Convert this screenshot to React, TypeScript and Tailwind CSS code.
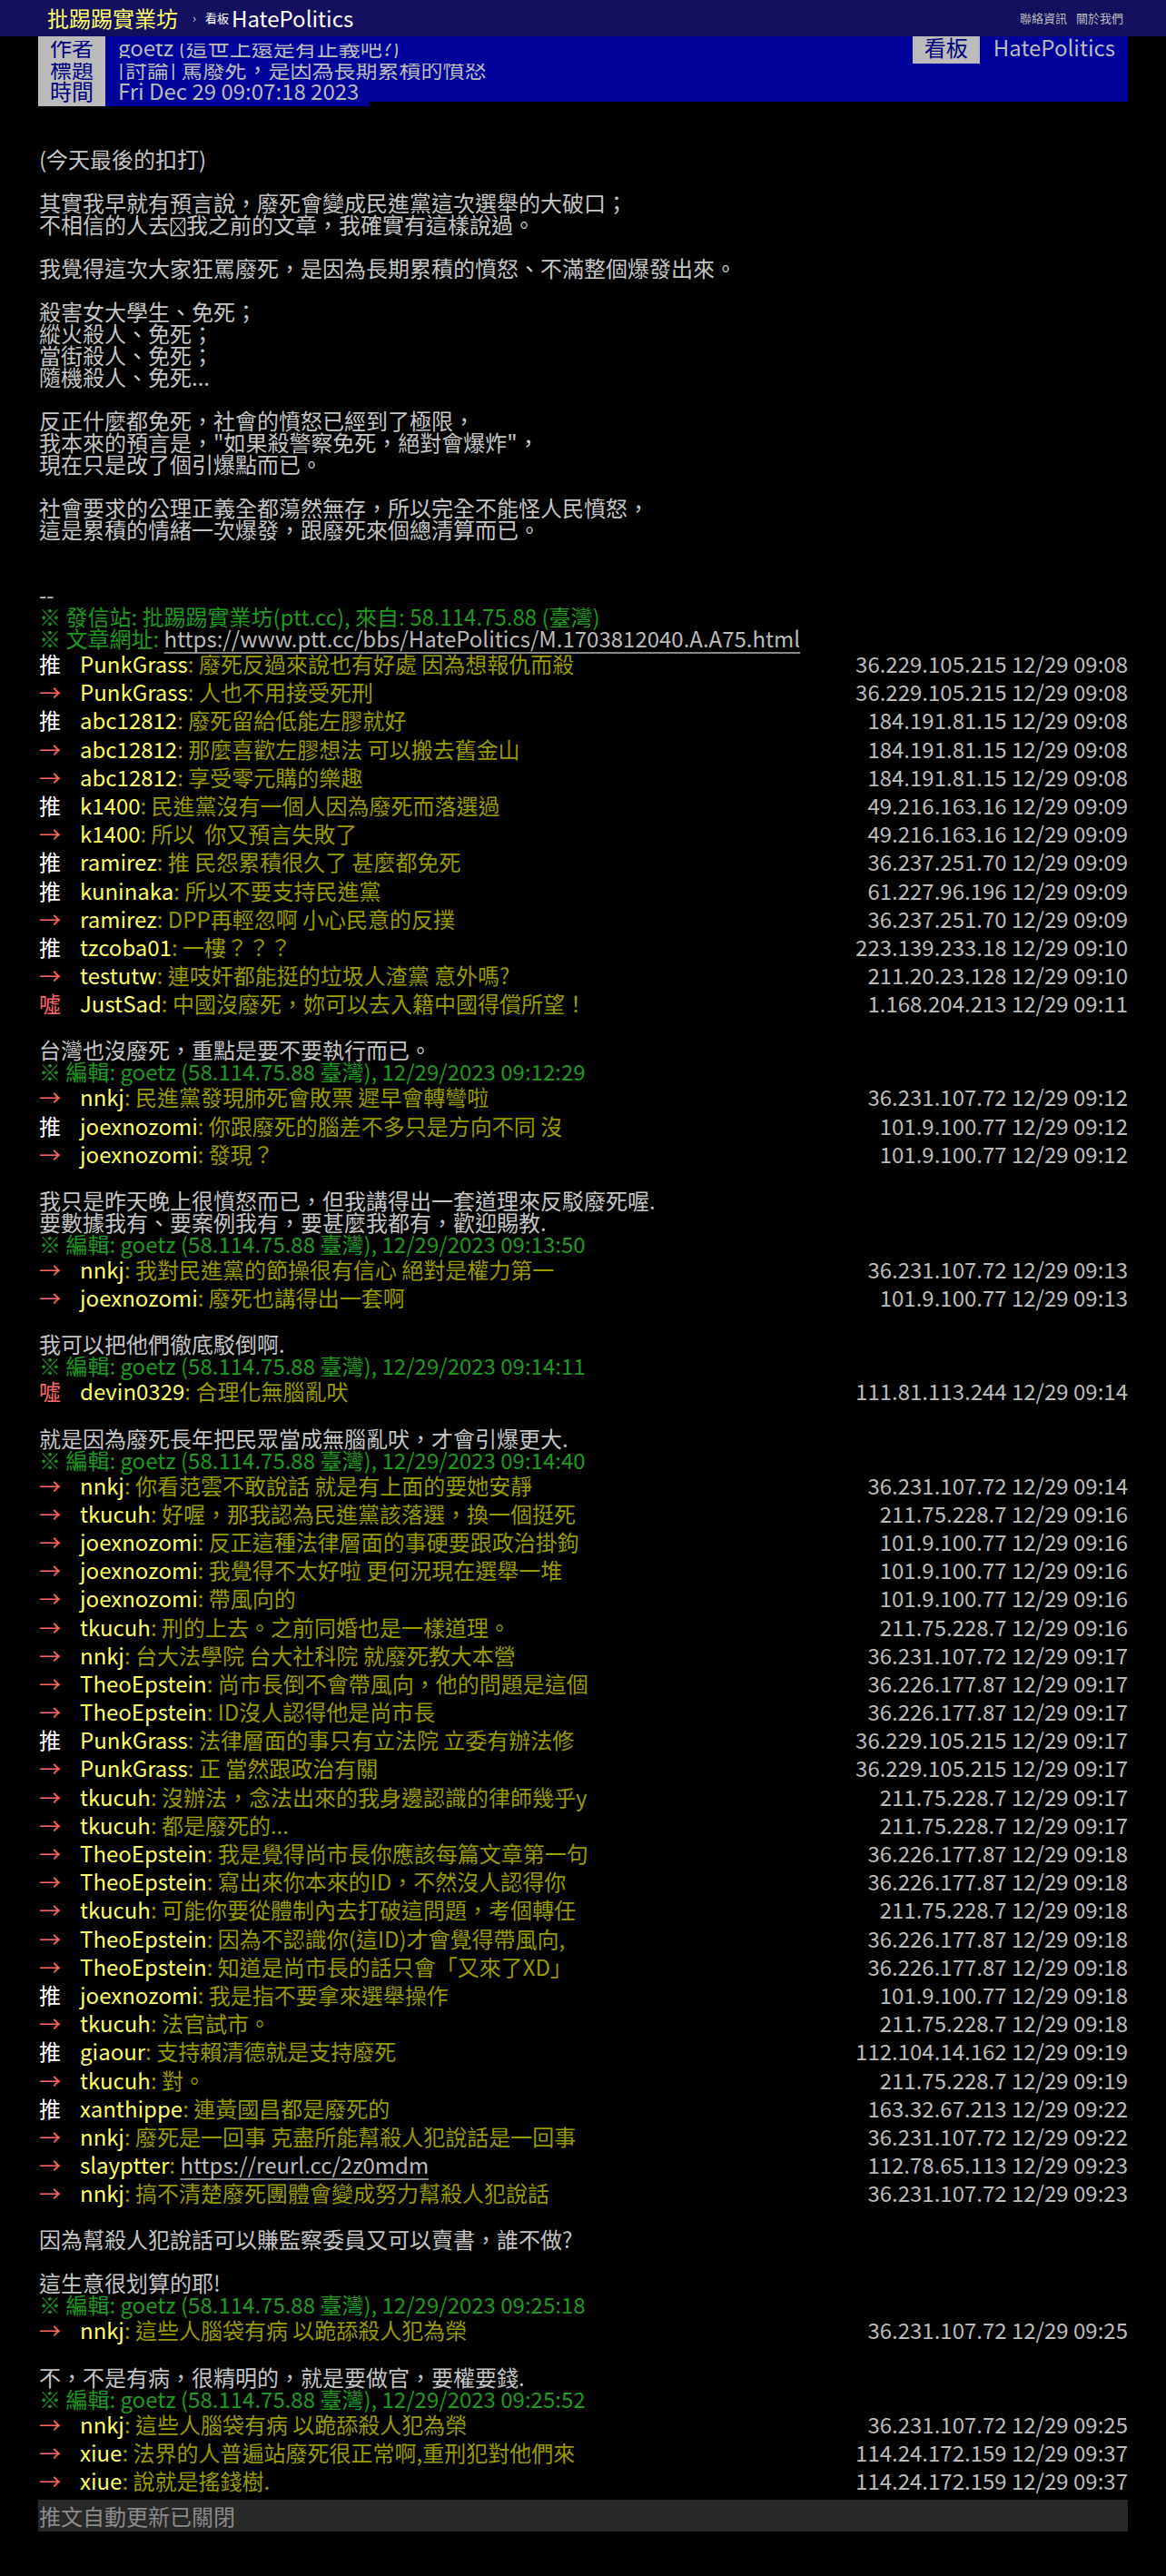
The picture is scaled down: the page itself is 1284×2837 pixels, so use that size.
import React from "react";

type Push = { t: "推" | "→" | "噓"; u: string; c: string; ip: string; link?: boolean };

const g1: Push[] = [
  { t: "推", u: "PunkGrass", c: "廢死反過來說也有好處 因為想報仇而殺", ip: "36.229.105.215 12/29 09:08" },
  { t: "→", u: "PunkGrass", c: "人也不用接受死刑", ip: "36.229.105.215 12/29 09:08" },
  { t: "推", u: "abc12812", c: "廢死留給低能左膠就好", ip: "184.191.81.15 12/29 09:08" },
  { t: "→", u: "abc12812", c: "那麼喜歡左膠想法 可以搬去舊金山", ip: "184.191.81.15 12/29 09:08" },
  { t: "→", u: "abc12812", c: "享受零元購的樂趣", ip: "184.191.81.15 12/29 09:08" },
  { t: "推", u: "k1400", c: "民進黨沒有一個人因為廢死而落選過", ip: "49.216.163.16 12/29 09:09" },
  { t: "→", u: "k1400", c: "所以  你又預言失敗了", ip: "49.216.163.16 12/29 09:09" },
  { t: "推", u: "ramirez", c: "推 民怨累積很久了 甚麼都免死", ip: "36.237.251.70 12/29 09:09" },
  { t: "推", u: "kuninaka", c: "所以不要支持民進黨", ip: "61.227.96.196 12/29 09:09" },
  { t: "→", u: "ramirez", c: "DPP再輕忽啊 小心民意的反撲", ip: "36.237.251.70 12/29 09:09" },
  { t: "推", u: "tzcoba01", c: "一樓？？？", ip: "223.139.233.18 12/29 09:10" },
  { t: "→", u: "testutw", c: "連吱奸都能挺的垃圾人渣黨 意外嗎?", ip: "211.20.23.128 12/29 09:10" },
  { t: "噓", u: "JustSad", c: "中國沒廢死，妳可以去入籍中國得償所望！", ip: "1.168.204.213 12/29 09:11" },
];

const g2: Push[] = [
  { t: "→", u: "nnkj", c: "民進黨發現肺死會敗票 遲早會轉彎啦", ip: "36.231.107.72 12/29 09:12" },
  { t: "推", u: "joexnozomi", c: "你跟廢死的腦差不多只是方向不同 沒", ip: "101.9.100.77 12/29 09:12" },
  { t: "→", u: "joexnozomi", c: "發現？", ip: "101.9.100.77 12/29 09:12" },
];

const g3: Push[] = [
  { t: "→", u: "nnkj", c: "我對民進黨的節操很有信心 絕對是權力第一", ip: "36.231.107.72 12/29 09:13" },
  { t: "→", u: "joexnozomi", c: "廢死也講得出一套啊", ip: "101.9.100.77 12/29 09:13" },
];

const g4: Push[] = [
  { t: "噓", u: "devin0329", c: "合理化無腦亂吠", ip: "111.81.113.244 12/29 09:14" },
];

const g5: Push[] = [
  { t: "→", u: "nnkj", c: "你看范雲不敢說話 就是有上面的要她安靜", ip: "36.231.107.72 12/29 09:14" },
  { t: "→", u: "tkucuh", c: "好喔，那我認為民進黨該落選，換一個挺死", ip: "211.75.228.7 12/29 09:16" },
  { t: "→", u: "joexnozomi", c: "反正這種法律層面的事硬要跟政治掛鉤", ip: "101.9.100.77 12/29 09:16" },
  { t: "→", u: "joexnozomi", c: "我覺得不太好啦 更何況現在選舉一堆", ip: "101.9.100.77 12/29 09:16" },
  { t: "→", u: "joexnozomi", c: "帶風向的", ip: "101.9.100.77 12/29 09:16" },
  { t: "→", u: "tkucuh", c: "刑的上去。之前同婚也是一樣道理。", ip: "211.75.228.7 12/29 09:16" },
  { t: "→", u: "nnkj", c: "台大法學院 台大社科院 就廢死教大本營", ip: "36.231.107.72 12/29 09:17" },
  { t: "→", u: "TheoEpstein", c: "尚市長倒不會帶風向，他的問題是這個", ip: "36.226.177.87 12/29 09:17" },
  { t: "→", u: "TheoEpstein", c: "ID沒人認得他是尚市長", ip: "36.226.177.87 12/29 09:17" },
  { t: "推", u: "PunkGrass", c: "法律層面的事只有立法院 立委有辦法修", ip: "36.229.105.215 12/29 09:17" },
  { t: "→", u: "PunkGrass", c: "正 當然跟政治有關", ip: "36.229.105.215 12/29 09:17" },
  { t: "→", u: "tkucuh", c: "沒辦法，念法出來的我身邊認識的律師幾乎y", ip: "211.75.228.7 12/29 09:17" },
  { t: "→", u: "tkucuh", c: "都是廢死的...", ip: "211.75.228.7 12/29 09:17" },
  { t: "→", u: "TheoEpstein", c: "我是覺得尚市長你應該每篇文章第一句", ip: "36.226.177.87 12/29 09:18" },
  { t: "→", u: "TheoEpstein", c: "寫出來你本來的ID，不然沒人認得你", ip: "36.226.177.87 12/29 09:18" },
  { t: "→", u: "tkucuh", c: "可能你要從體制內去打破這問題，考個轉任", ip: "211.75.228.7 12/29 09:18" },
  { t: "→", u: "TheoEpstein", c: "因為不認識你(這ID)才會覺得帶風向,", ip: "36.226.177.87 12/29 09:18" },
  { t: "→", u: "TheoEpstein", c: "知道是尚市長的話只會「又來了XD」", ip: "36.226.177.87 12/29 09:18" },
  { t: "推", u: "joexnozomi", c: "我是指不要拿來選舉操作", ip: "101.9.100.77 12/29 09:18" },
  { t: "→", u: "tkucuh", c: "法官試市。", ip: "211.75.228.7 12/29 09:18" },
  { t: "推", u: "giaour", c: "支持賴清德就是支持廢死", ip: "112.104.14.162 12/29 09:19" },
  { t: "→", u: "tkucuh", c: "對。", ip: "211.75.228.7 12/29 09:19" },
  { t: "推", u: "xanthippe", c: "連黃國昌都是廢死的", ip: "163.32.67.213 12/29 09:22" },
  { t: "→", u: "nnkj", c: "廢死是一回事 克盡所能幫殺人犯說話是一回事", ip: "36.231.107.72 12/29 09:22" },
  { t: "→", u: "slayptter", c: "https://reurl.cc/2z0mdm", ip: "112.78.65.113 12/29 09:23", link: true },
  { t: "→", u: "nnkj", c: "搞不清楚廢死團體會變成努力幫殺人犯說話", ip: "36.231.107.72 12/29 09:23" },
];

const g6: Push[] = [
  { t: "→", u: "nnkj", c: "這些人腦袋有病 以跪舔殺人犯為榮", ip: "36.231.107.72 12/29 09:25" },
];

const g7: Push[] = [
  { t: "→", u: "nnkj", c: "這些人腦袋有病 以跪舔殺人犯為榮", ip: "36.231.107.72 12/29 09:25" },
  { t: "→", u: "xiue", c: "法界的人普遍站廢死很正常啊,重刑犯對他們來", ip: "114.24.172.159 12/29 09:37" },
  { t: "→", u: "xiue", c: "說就是搖錢樹.", ip: "114.24.172.159 12/29 09:37" },
];

function Line({ children, green }: { children?: React.ReactNode; green?: boolean }) {
  return (
    <div className={`h-[24px] leading-[24px] whitespace-pre ${green ? "text-[#1f9a1f]" : "text-[#c4c4c4]"}`}>
      {children}
    </div>
  );
}

function Pushes({ list }: { list: Push[] }) {
  return (
    <>
      {list.map((p, i) => (
        <div key={i} className="flex h-[31.2px] items-center leading-[31.2px] whitespace-pre">
          <span className={`w-[45px] shrink-0 ${p.t === "推" ? "text-white" : "text-[#f66]"}`}>{p.t}</span>
          <span className="text-[#ffff66]">{p.u}</span>
          <span className="text-[#999900]">
            {": "}
            {p.link ? (
              <span className="text-[#bbbbbb] underline decoration-[#888] underline-offset-[5px]">{p.c}</span>
            ) : (
              p.c
            )}
          </span>
          <span className="ml-auto text-[#bbbbbb]">{p.ip}</span>
        </div>
      ))}
    </>
  );
}

function Tofu() {
  return (
    <span className="inline-block h-[22px] w-[18px] align-[-4px]">
      <svg width="18" height="22" viewBox="0 0 18 22">
        <rect x="1.5" y="1.5" width="15" height="19" fill="none" stroke="#c4c4c4" strokeWidth="1.5" />
        <line x1="1.5" y1="1.5" x2="16.5" y2="20.5" stroke="#c4c4c4" strokeWidth="1.2" />
        <line x1="16.5" y1="1.5" x2="1.5" y2="20.5" stroke="#c4c4c4" strokeWidth="1.2" />
      </svg>
    </span>
  );
}

export default function App() {
  return (
    <div className="min-h-screen bg-black font-['Noto_Sans_CJK_TC','Noto_Sans',sans-serif] text-[24px]">
      <div className="relative z-10 flex h-[40px] items-center justify-between bg-[#14105f] pl-[52px] pr-[47px]">
        <div className="flex items-center">
          <span className="text-[24px] leading-[40px] text-[#ffff66]">批踢踢實業坊</span>
          <span className="ml-[16px] text-[13px] text-[#cccccc]">›</span>
          <span className="ml-[10px] text-[13px] text-white">看板</span>
          <span className="ml-[3px] text-[24px] leading-[40px] text-white">HatePolitics</span>
        </div>
        <div className="flex items-center gap-[10px] text-[13px] text-[#bbbbbb]">
          <span>聯絡資訊</span>
          <span>關於我們</span>
        </div>
      </div>

      <div className="mx-auto w-[1200px]">
        <div className="h-[72px] bg-[#00009a] leading-[24px]">
          <div className="flex h-[24px] items-start">
            <span className="w-[74px] shrink-0 bg-[#bbbbbb] text-center text-[#000080]">
              <span className="inline-block [clip-path:inset(5px_0_0_0)]">作者</span>
            </span>
            <span className="inline-block pl-[14px] text-[#bbbbbb] [clip-path:inset(8px_0_0_0)]">goetz (這世上還是有正義吧?)</span>
            <div className="ml-auto flex items-start">
              <span className="h-[30px] w-[74px] bg-[#bbbbbb] text-center text-[#000080]">看板</span>
              <span className="ml-[15px] mr-[14px] text-[#bbbbbb]">HatePolitics</span>
            </div>
          </div>
          <div className="flex h-[24px]">
            <span className="w-[74px] shrink-0 bg-[#bbbbbb] text-center text-[#000080]">
              <span className="inline-block [clip-path:inset(5px_0_0_0)]">標題</span>
            </span>
            <span className="inline-block pl-[14px] text-[#bbbbbb] [clip-path:inset(6px_0_0_0)]">[討論] 罵廢死，是因為長期累積的憤怒</span>
          </div>
          <div className="flex h-[24px] items-start">
            <span className="h-[29px] w-[74px] shrink-0 bg-[#bbbbbb] text-center text-[#000080]">時間</span>
            <span className="h-[29px] w-[291px] bg-[#00009a] pl-[14px] text-[#bbbbbb]">Fri Dec 29 09:07:18 2023</span>
          </div>
        </div>

        <div className="pt-[3px] pl-[1px]">
          <Line />
          <Line />
          <Line>(今天最後的扣打)</Line>
          <Line />
          <Line>其實我早就有預言說，廢死會變成民進黨這次選舉的大破口；</Line>
          <Line>
            不相信的人去<Tofu />我之前的文章，我確實有這樣說過。
          </Line>
          <Line />
          <Line>我覺得這次大家狂罵廢死，是因為長期累積的憤怒、不滿整個爆發出來。</Line>
          <Line />
          <Line>殺害女大學生、免死；</Line>
          <Line>縱火殺人、免死；</Line>
          <Line>當街殺人、免死；</Line>
          <Line>隨機殺人、免死...</Line>
          <Line />
          <Line>反正什麼都免死，社會的憤怒已經到了極限，</Line>
          <Line>我本來的預言是，"如果殺警察免死，絕對會爆炸"，</Line>
          <Line>現在只是改了個引爆點而已。</Line>
          <Line />
          <Line>社會要求的公理正義全都蕩然無存，所以完全不能怪人民憤怒，</Line>
          <Line>這是累積的情緒一次爆發，跟廢死來個總清算而已。</Line>
          <Line />
          <Line />
          <Line>--</Line>
          <Line green>※ 發信站: 批踢踢實業坊(ptt.cc), 來自: 58.114.75.88 (臺灣)</Line>
          <Line green>
            ※ 文章網址:{" "}
            <span className="text-[#bbbbbb] underline decoration-[#888] underline-offset-[5px]">
              https://www.ptt.cc/bbs/HatePolitics/M.1703812040.A.A75.html
            </span>
          </Line>
          <Pushes list={g1} />
          <Line />
          <Line>台灣也沒廢死，重點是要不要執行而已。</Line>
          <Line green>※ 編輯: goetz (58.114.75.88 臺灣), 12/29/2023 09:12:29</Line>
          <Pushes list={g2} />
          <Line />
          <Line>我只是昨天晚上很憤怒而已，但我講得出一套道理來反駁廢死喔.</Line>
          <Line>要數據我有、要案例我有，要甚麼我都有，歡迎賜教.</Line>
          <Line green>※ 編輯: goetz (58.114.75.88 臺灣), 12/29/2023 09:13:50</Line>
          <Pushes list={g3} />
          <Line />
          <Line>我可以把他們徹底駁倒啊.</Line>
          <Line green>※ 編輯: goetz (58.114.75.88 臺灣), 12/29/2023 09:14:11</Line>
          <Pushes list={g4} />
          <Line />
          <Line>就是因為廢死長年把民眾當成無腦亂吠，才會引爆更大.</Line>
          <Line green>※ 編輯: goetz (58.114.75.88 臺灣), 12/29/2023 09:14:40</Line>
          <Pushes list={g5} />
          <Line />
          <Line>因為幫殺人犯說話可以賺監察委員又可以賣書，誰不做?</Line>
          <Line />
          <Line>這生意很划算的耶!</Line>
          <Line green>※ 編輯: goetz (58.114.75.88 臺灣), 12/29/2023 09:25:18</Line>
          <Pushes list={g6} />
          <Line />
          <Line>不，不是有病，很精明的，就是要做官，要權要錢.</Line>
          <Line green>※ 編輯: goetz (58.114.75.88 臺灣), 12/29/2023 09:25:52</Line>
          <Pushes list={g7} />
        </div>

        <div className="mt-[6px] h-[35px] bg-[#282828] pl-[1px] leading-[35px] text-[#8a8a8a]">推文自動更新已關閉</div>
      </div>
    </div>
  );
}
